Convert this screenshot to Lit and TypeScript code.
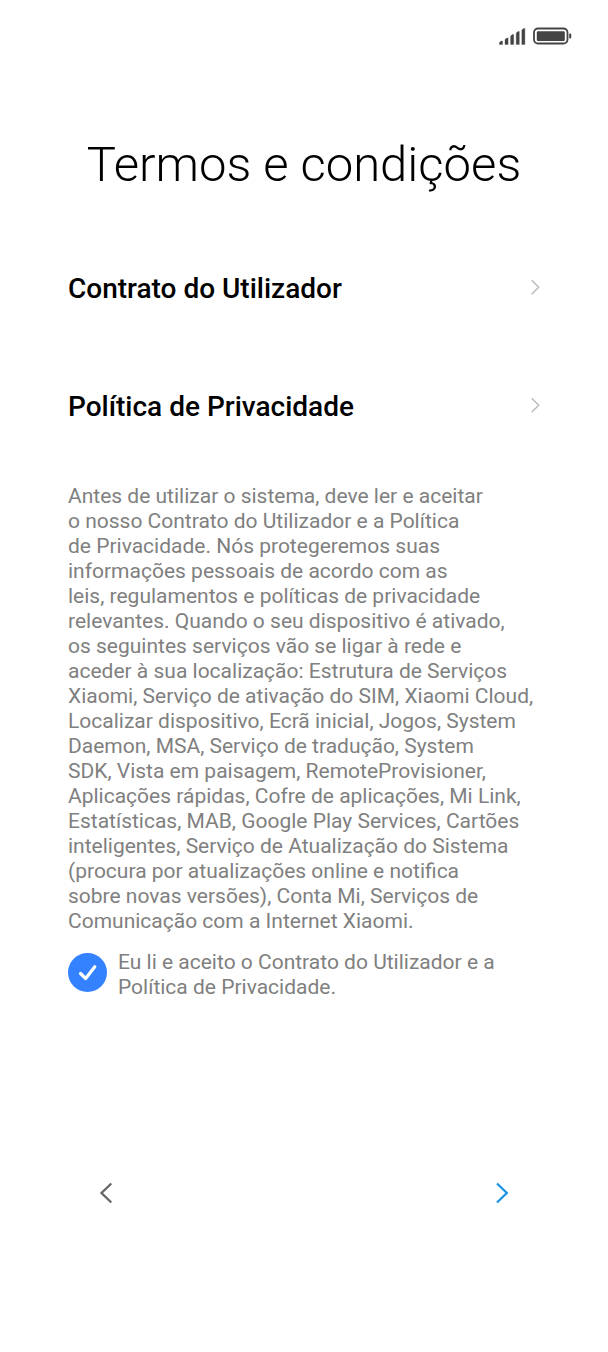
import { LitElement, html, css, svg } from "lit";
import { customElement, state } from "lit/decorators.js";

const NOTICE = [
  "Antes de utilizar o sistema, deve ler e aceitar",
  "o nosso Contrato do Utilizador e a Política",
  "de Privacidade. Nós protegeremos suas",
  "informações pessoais de acordo com as",
  "leis, regulamentos e políticas de privacidade",
  "relevantes. Quando o seu dispositivo é ativado,",
  "os seguintes serviços vão se ligar à rede e",
  "aceder à sua localização: Estrutura de Serviços",
  "Xiaomi, Serviço de ativação do SIM, Xiaomi Cloud,",
  "Localizar dispositivo, Ecrã inicial, Jogos, System",
  "Daemon, MSA, Serviço de tradução, System",
  "SDK, Vista em paisagem, RemoteProvisioner,",
  "Aplicações rápidas, Cofre de aplicações, Mi Link,",
  "Estatísticas, MAB, Google Play Services, Cartões",
  "inteligentes, Serviço de Atualização do Sistema",
  "(procura por atualizações online e notifica",
  "sobre novas versões), Conta Mi, Serviços de",
  "Comunicação com a Internet Xiaomi.",
];

@customElement("app-root")
export class AppRoot extends LitElement {
  @state() private accepted = true;

  static styles = css`
    :host {
      display: flex;
      flex-direction: column;
      min-height: 100vh;
      box-sizing: border-box;
      background: #fff;
      color: #000;
      font-family: Roboto, sans-serif;
    }
    .status {
      display: flex;
      justify-content: flex-end;
      align-items: center;
      gap: 7px;
      padding: 27px 36px 0;
    }
    svg { display: block; }
    h1 {
      margin: 90px 0 0;
      text-align: center;
      font-size: 49px;
      line-height: 60px;
      font-weight: 300;
    }
    nav { padding: 34px 68px 0; }
    .row {
      display: flex;
      justify-content: space-between;
      align-items: center;
      height: 118px;
      font-size: 28px;
      font-weight: 500;
      color: #000;
      text-decoration: none;
    }
    .notice, .consent {
      font-size: 21px;
      line-height: 25px;
      color: #808080;
    }
    .notice { margin: 19px 68px 0; white-space: pre-line; }
    .consent {
      display: flex;
      align-items: flex-start;
      gap: 11px;
      margin: 16px 68px 0;
    }
    .check { position: relative; flex: none; width: 39px; height: 39px; margin-top: 3px; }
    .check input {
      appearance: none;
      display: block;
      width: 100%;
      height: 100%;
      margin: 0;
      border-radius: 50%;
      background: #d8d8d8;
    }
    .check input:checked { background: #3482ff; }
    .check svg { position: absolute; inset: 0; pointer-events: none; }
    footer {
      display: flex;
      justify-content: space-between;
      margin-top: auto;
      padding: 0 82px 135px;
    }
    button {
      display: grid;
      place-items: center;
      width: 48px;
      height: 48px;
      padding: 0;
      border: 0;
      background: none;
    }
  `;

  private row(label: string) {
    return html`<a class="row" href="#"
      ><span>${label}</span>
      <svg width="10" height="18" viewBox="0 0 10 18" fill="none" stroke="#b8b8b8" stroke-width="1.4" aria-hidden="true">
        <path d="M1.700 1.200 8.700 8.200 1.700 15.200" /></svg
    ></a>`;
  }

  render() {
    return html`
      <div class="status">
        <svg width="27" height="18" viewBox="0 0 27 18" fill="#444" aria-hidden="true">
          ${[3.5, 6.5, 10, 13, 16].map((h, i) => {
            const x = 0.4 + i * 5.6;
            return svg`<path d=${`M${x} 17.500V${19 - h}L${x + 1.8} ${17.5 - h}H${x + 3.1}V17.500Z`} stroke="#444" stroke-width=".3" stroke-linejoin="round" />`;
          })}
        </svg>
        <svg width="39" height="18" viewBox="0 0 39 18" aria-hidden="true">
          <rect x="1" y="1.500" width="33.500" height="15" rx="4" fill="none" stroke="#444" stroke-width="1.800" />
          <rect x="3.800" y="4.200" width="28" height="9.700" rx="1.200" fill="#444" />
          <rect x="36.200" y="6.500" width="2" height="5" rx=".8" fill="#444" />
        </svg>
      </div>
      <h1>Termos e condições</h1>
      <nav>${this.row("Contrato do Utilizador")}${this.row("Política de Privacidade")}</nav>
      <p class="notice">${NOTICE.join("\n")}</p>
      <div class="consent">
        <span class="check">
          <input id="accept" type="checkbox" .checked=${this.accepted}
            @change=${(e: Event) => (this.accepted = (e.target as HTMLInputElement).checked)} />
          <svg viewBox="0 0 39 39" fill="none" stroke="#fff" stroke-width="3.200" stroke-linecap="round" stroke-linejoin="round" aria-hidden="true">
            <path d="M12.500 20.500 17.700 25.500 26.800 13.800" />
          </svg>
        </span>
        <label for="accept">Eu li e aceito o Contrato do Utilizador e a Política de Privacidade.</label>
      </div>
      <footer>
        <button aria-label="Voltar">
          <svg width="14" height="22" viewBox="0 0 14 22" fill="none" stroke="#666" stroke-width="2.300"><path d="M12.300 1.500 2.500 11 12.300 20.500" /></svg>
        </button>
        <button aria-label="Seguinte" ?disabled=${!this.accepted}>
          <svg width="14" height="22" viewBox="0 0 14 22" fill="none" stroke="#1a94e6" stroke-width="2.300"><path d="M2 1.500 11.800 11 2 20.500" /></svg>
        </button>
      </footer>
    `;
  }
}
